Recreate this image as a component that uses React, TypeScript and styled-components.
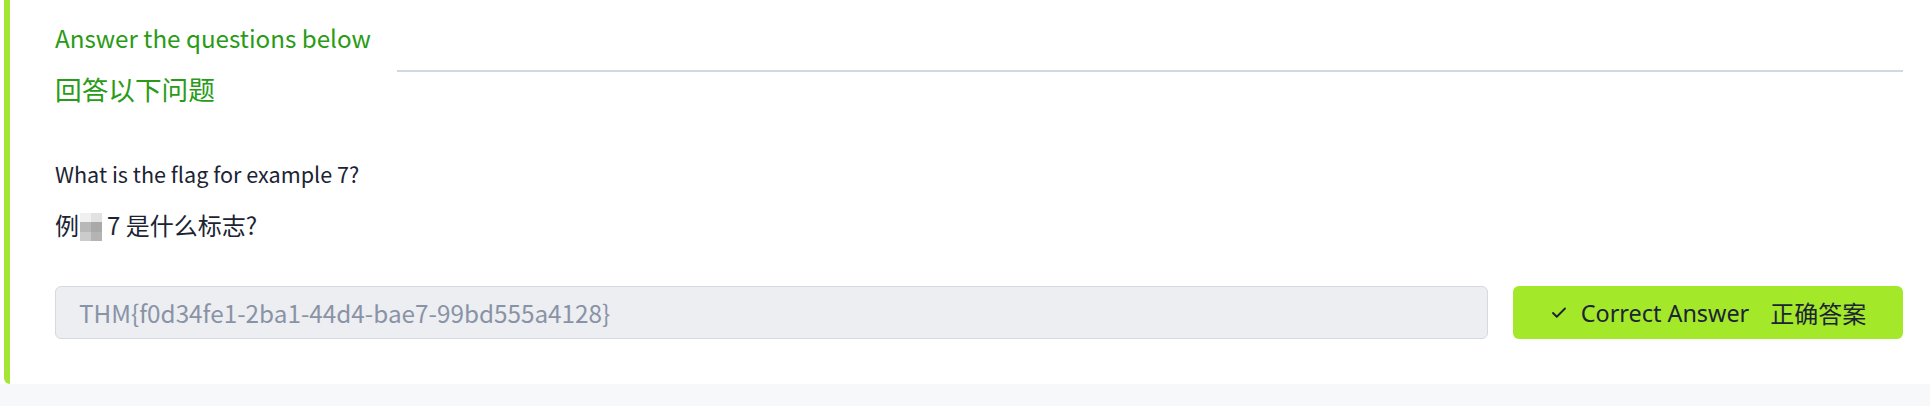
import React from "react";
import styled, { createGlobalStyle } from "styled-components";
import { Check } from "lucide-react";

const GlobalStyle = createGlobalStyle`
  html, body {
    margin: 0;
    padding: 0;
    background: #f7f8fa;
    font-family: "Noto Sans CJK SC", "Noto Sans", sans-serif;
  }
  * { box-sizing: border-box; }
`;

const Panel = styled.section`
  background: #ffffff;
  padding-left: 4px;
`;

const Card = styled.div`
  background: #ffffff;
  border-left: 6px solid #a3e635;
  border-bottom-left-radius: 6px;
  padding: 18px 27px 45px 45px;
`;

const Header = styled.div`
  display: flex;
  align-items: flex-start;
`;

const TitleBlock = styled.div`
  flex: none;
  color: #2a9b16;
`;

const TitleLine = styled.div<{ $cjk?: boolean }>`
  font-size: ${(p) => (p.$cjk ? "26.67px" : "24.2px")};
  line-height: 40px;
  margin-top: ${(p) => (p.$cjk ? "11px" : "0")};
  white-space: nowrap;
`;

const Rule = styled.div`
  flex: 1;
  height: 2px;
  margin: 52px 0 0 26px;
  background: #d3d7de;
`;

const Question = styled.div`
  margin-top: 47px;
  color: #1c2433;
`;

const QuestionLine = styled.p<{ $cjk?: boolean }>`
  margin: ${(p) => (p.$cjk ? "15px 0 0" : "0")};
  font-size: ${(p) => (p.$cjk ? "24px" : "21.6px")};
  line-height: 36px;
  height: 36px;
`;

// pixelated redaction over one character
const Blur = styled.span`
  display: inline-block;
  width: 22px;
  height: 28px;
  vertical-align: -6px;
  margin: 0 5px 0 1px;
  background:
    linear-gradient(#f0f0f0, #f0f0f0) 0 0 / 11px 9px no-repeat,
    linear-gradient(#e2e2e2, #e2e2e2) 11px 0 / 11px 9px no-repeat,
    linear-gradient(#b8b8b8, #b8b8b8) 0 9px / 11px 10px no-repeat,
    linear-gradient(#a9a9a9, #a9a9a9) 11px 9px / 11px 10px no-repeat,
    linear-gradient(#cbcbcb, #cbcbcb) 0 19px / 11px 9px no-repeat,
    linear-gradient(#b4b4b4, #b4b4b4) 11px 19px / 11px 9px no-repeat;
`;

const AnswerRow = styled.div`
  display: flex;
  gap: 25px;
  margin-top: 43px;
`;

const AnswerInput = styled.input`
  flex: 1;
  min-width: 0;
  height: 53px;
  padding: 0 23px;
  border: 1px solid #d5d9e0;
  border-radius: 6px;
  background: #eceef2;
  color: #8a93a6;
  font-family: "Noto Sans CJK SC", "Noto Sans", sans-serif;
  font-size: 24.3px;
  outline: none;
`;

const CorrectButton = styled.button`
  flex: none;
  width: 390px;
  height: 53px;
  display: flex;
  align-items: center;
  justify-content: center;
  gap: 13px;
  border: none;
  border-radius: 6px;
  background: #a3e92a;
  color: #1c2433;
  font-family: "Noto Sans", "Noto Sans CJK SC", sans-serif;
  font-size: 23.4px;
  cursor: pointer;
`;

const CnLabel = styled.span`
  margin-left: 8px;
  font-family: "Noto Sans CJK SC", sans-serif;
  font-size: 24px;
`;

export default function App() {
  return (
    <>
      <GlobalStyle />
      <Panel>
        <Card>
          <Header>
            <TitleBlock>
              <TitleLine>Answer the questions below</TitleLine>
              <TitleLine $cjk>回答以下问题</TitleLine>
            </TitleBlock>
            <Rule />
          </Header>
          <Question>
            <QuestionLine>What is the flag for example 7?</QuestionLine>
            <QuestionLine $cjk>
              例<Blur />7 是什么标志?
            </QuestionLine>
          </Question>
          <AnswerRow>
            <AnswerInput readOnly value="THM{f0d34fe1-2ba1-44d4-bae7-99bd555a4128}" />
            <CorrectButton>
              <Check size={18} strokeWidth={2.5} />
              <span>Correct Answer</span>
              <CnLabel>正确答案</CnLabel>
            </CorrectButton>
          </AnswerRow>
        </Card>
      </Panel>
    </>
  );
}
